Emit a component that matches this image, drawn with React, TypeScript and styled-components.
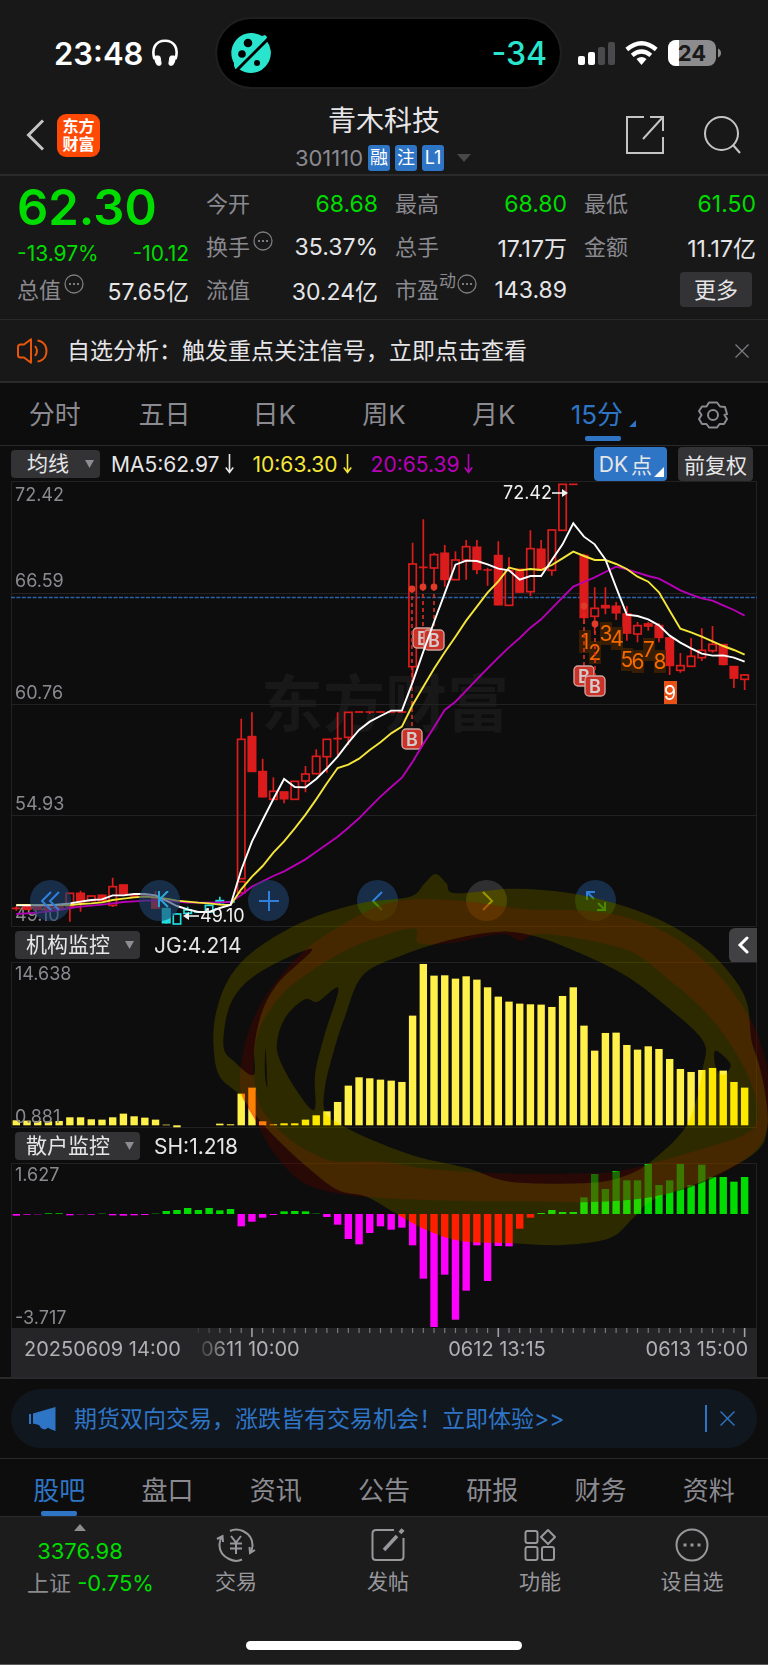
import React from 'react';
import styled, { createGlobalStyle } from 'styled-components';

const FONT = `Inter, 'Noto Sans CJK SC', sans-serif`;

const color = {
  panel: '#181818',
  page: '#0d0d0d',
  line: '#2a2a2c',
  grid: '#222224',
  button: '#333335',
  label: '#8a8a90',
  text: '#e6e6e8',
  blue: '#2f75c6',
  green: '#00dc00',
  red: '#dc1c1c',
  cyan: '#22dce0',
  yellow: '#f5e63a',
  purple: '#b800b8',
};

const GlobalStyle = createGlobalStyle`
  * { box-sizing: border-box; }
  body { margin: 0; background: ${color.page}; color: ${color.text}; font-family: ${FONT}; }
  button, select { font-family: inherit; border: 0; padding: 0; margin: 0; background: none; color: inherit; }
  button { cursor: pointer; }
  svg { display: block; flex: none; }
`;

const Page = styled.main`
  display: flex;
  flex-direction: column;
  min-height: 100vh;
`;

/* ---------- status bar ---------- */

const StatusBar = styled.header`
  display: grid;
  grid-template-columns: 217fr 343px 208fr;
  align-items: center;
  height: 100px;
  padding: 6px 0 0;
  background: ${color.panel};
`;

const Clock = styled.div`
  display: flex;
  align-items: center;
  gap: 8px;
  padding-left: 54px;
  font-size: 31px;
  font-weight: 600;
  color: #fff;
`;

const Island = styled.div`
  display: flex;
  align-items: center;
  justify-content: space-between;
  height: 68px;
  padding: 0 13px 0 14px;
  border-radius: 34px;
  background: #000;
  outline: 2px solid #1f1f1f;
  color: #2ae5cd;
  font-size: 32px;
  font-weight: 500;
`;

const Signals = styled.div`
  display: flex;
  align-items: center;
  justify-content: flex-end;
  gap: 10px;
  padding-right: 47px;
`;

/* ---------- title bar ---------- */

const TitleBar = styled.section`
  display: grid;
  grid-template-columns: 1fr auto 1fr;
  height: 76px;
  padding: 0 26px;
  border-bottom: 2px solid ${color.line};
  background: ${color.panel};
`;

const TitleSide = styled.div<{ $end?: boolean }>`
  display: flex;
  align-items: center;
  justify-content: ${(p) => (p.$end ? 'flex-end' : 'flex-start')};
  gap: ${(p) => (p.$end ? '38px' : '12px')};
  padding-bottom: 4px;
`;

const IconButton = styled.button`
  display: flex;
  color: #c4c4c6;
`;

const AppLogo = styled.div`
  display: flex;
  flex-direction: column;
  align-items: center;
  justify-content: center;
  width: 43px;
  height: 43px;
  border-radius: 9px;
  background: #ff4a06;
  color: #fff;
  font-size: 16px;
  font-weight: 700;
  line-height: 18px;
`;

const TitleBlock = styled.div`
  display: flex;
  flex-direction: column;
  align-items: center;
`;

const StockName = styled.h1`
  margin: 0;
  font-size: 28px;
  font-weight: 400;
  line-height: 42px;
`;

const CodeLine = styled.div`
  display: flex;
  align-items: center;
  gap: 5px;
  height: 32px;
  font-size: 22px;
  color: ${color.label};
`;

const Tag = styled.span`
  width: 22px;
  height: 26px;
  border-radius: 3px;
  background: ${color.blue};
  color: #fff;
  font-size: 18px;
  line-height: 26px;
  text-align: center;
`;

/* ---------- quote ---------- */

const Quote = styled.section`
  display: grid;
  grid-template-columns: repeat(4, 1fr);
  column-gap: 17px;
  padding: 6px 12px 8px 17px;
  border-bottom: 1px solid ${color.line};
  background: ${color.panel};
`;

const QuoteColumn = styled.div`
  display: flex;
  flex-direction: column;
`;

const Price = styled.div`
  height: 52px;
  font-size: 49px;
  font-weight: 600;
  line-height: 52px;
  color: ${color.green};
`;

const Change = styled.div`
  display: flex;
  align-items: center;
  justify-content: space-between;
  height: 34px;
  padding-top: 4px;
  font-size: 21px;
  color: ${color.green};
`;

const StatRow = styled.div`
  display: flex;
  align-items: center;
  justify-content: space-between;
  height: 43px;
  white-space: nowrap;
`;

const StatLabel = styled.span`
  display: flex;
  align-items: center;
  gap: 3px;
  padding-bottom: 4px;
  font-size: 22px;
  color: ${color.label};
  svg { margin-bottom: 8px; }
  sup { font-size: 17px; line-height: 17px; margin-bottom: 12px; margin-left: -3px; margin-right: -2px; }
`;

const StatValue = styled.span<{ $down?: boolean }>`
  font-size: 23px;
  color: ${(p) => (p.$down ? color.green : color.text)};
`;

const MoreButton = styled.button`
  width: 72px;
  height: 35px;
  margin-left: auto;
  margin-right: 4px;
  border-radius: 4px;
  background: ${color.button};
  font-size: 22px;
  line-height: 32px;
`;

const Notice = styled.section`
  display: flex;
  align-items: center;
  gap: 18px;
  height: 63px;
  padding: 0 19px 0 17px;
  border-bottom: 2px solid ${color.line};
  background: ${color.panel};
  font-size: 23px;
  span { padding-bottom: 4px; }
  button { margin-left: auto; color: #7c7c80; }
`;

/* ---------- tabs ---------- */

const Tabs = styled.nav<{ $inset?: boolean }>`
  display: grid;
  grid-template-columns: repeat(7, 1fr);
  height: ${(p) => (p.$inset ? '58px' : '63px')};
  padding: 0 ${(p) => (p.$inset ? '5px' : '0')};
  border-bottom: 1px solid ${color.line};
`;

const Tab = styled.button<{ $active?: boolean; $low?: boolean }>`
  position: relative;
  display: flex;
  align-items: center;
  justify-content: center;
  gap: 6px;
  padding-top: ${(p) => (p.$low ? '6px' : '1px')};
  font-size: 26px;
  line-height: 30px;
  color: ${(p) => (p.$active ? color.blue : color.label)};
  &::after {
    content: '';
    display: ${(p) => (p.$active ? 'block' : 'none')};
    position: absolute;
    left: calc(50% - 18px);
    bottom: ${(p) => (p.$low ? '0' : '4px')};
    width: 36px;
    height: 5px;
    border-radius: 2px;
    background: ${color.blue};
  }
`;

const Corner = styled.span<{ $tone: string; $size: number }>`
  align-self: flex-end;
  width: ${(p) => p.$size}px;
  height: ${(p) => p.$size}px;
  background: ${(p) => p.$tone};
  clip-path: polygon(100% 0, 100% 100%, 0 100%);
`;

const TabCorner = styled(Corner)`
  margin-bottom: 18px;
`;

/* ---------- chart area ---------- */

const Toolbar = styled.div`
  display: flex;
  align-items: center;
  height: 35px;
  padding: 1px 15px 0 11px;
  font-size: 21px;
`;

const Picker = styled.div<{ $wide?: boolean }>`
  position: relative;
  width: ${(p) => (p.$wide ? '125px' : '89px')};
  height: 28px;
  border-radius: 4px;
  background: ${color.button};
  select {
    width: 100%;
    height: 28px;
    padding-left: ${(p) => (p.$wide ? '11px' : '16px')};
    appearance: none;
    font-size: 21px;
    line-height: 28px;
    outline: none;
  }
  svg { position: absolute; right: 6px; top: 10px; pointer-events: none; }
`;

const Average = styled.span<{ $tone: string }>`
  display: flex;
  align-items: center;
  gap: 5px;
  margin-left: 11px;
  margin-right: 8px;
  color: ${(p) => p.$tone};
`;

const ToolButton = styled.button<{ $on?: boolean }>`
  display: flex;
  align-items: center;
  justify-content: center;
  gap: ${(p) => (p.$on ? '3px' : '0')};
  height: 34px;
  margin-left: ${(p) => (p.$on ? 'auto' : '11px')};
  padding: ${(p) => (p.$on ? '0 3px 0 5px' : '0 6px')};
  border-radius: 4px;
  background: ${(p) => (p.$on ? color.blue : color.button)};
  font-size: 21px;
  white-space: nowrap;
  ${Corner} { margin-bottom: 4px; margin-left: -1px; }
`;

const Stage = styled.section`
  position: relative;
  isolation: isolate;
  padding: 0 11px;
  background: ${color.page};
  border-bottom: 2px solid ${color.line};
  overflow: hidden;
`;

const Plot = styled.svg`
  width: 100%;
  height: auto;
  font-family: ${FONT};
`;

const PlotFrame = styled.div`
  position: relative;
`;

const IndicatorBar = styled.div`
  display: flex;
  align-items: center;
  justify-content: space-between;
  height: 35px;
  padding-top: 1px;
  padding-left: 4px;
  font-size: 21px;
`;

const IndicatorValue = styled.span`
  flex: 1;
  padding-left: 14px;
`;

const CollapseButton = styled.button`
  display: flex;
  align-items: center;
  justify-content: center;
  width: 28px;
  height: 35px;
  border-radius: 6px 0 0 6px;
  background: #414143;
  color: #fff;
`;

const ChartControls = styled.div`
  position: absolute;
  left: 19px;
  bottom: 6px;
  display: flex;
  gap: 68px;
`;

const RoundButton = styled.button<{ $muted?: boolean }>`
  display: flex;
  align-items: center;
  justify-content: center;
  width: 41px;
  height: 41px;
  border-radius: 50%;
  background: ${(p) => (p.$muted ? 'rgba(70, 70, 74, 0.6)' : 'rgba(32, 68, 112, 0.6)')};
  color: ${(p) => (p.$muted ? '#8f8f93' : '#2f80dc')};
`;

const Ink = styled.svg<{ $blend: 'multiply' | 'screen' }>`
  position: absolute;
  inset: 0;
  width: 100%;
  height: 100%;
  pointer-events: none;
  mix-blend-mode: ${(p) => p.$blend};
`;

/* ---------- bottom ---------- */

const BannerWrap = styled.section`
  padding: 10px 11px;
  border-bottom: 1px solid ${color.line};
`;

const Banner = styled.div`
  display: flex;
  align-items: center;
  height: 59px;
  padding: 0 22px 0 17px;
  border-radius: 30px;
  background: #10171f;
  color: ${color.blue};
  font-size: 23px;
  a { flex: 1; margin-left: 17px; padding-bottom: 4px; color: inherit; text-decoration: none; }
  button { padding-left: 13px; border-left: 2px solid ${color.blue}; height: 27px; display: flex; align-items: center; color: inherit; }
`;

const Dock = styled.footer`
  display: grid;
  grid-template-columns: 160px repeat(4, 1fr);
  flex: 1;
  grid-template-rows: 124px 1fr;
  min-height: 148px;
  background: #1c1c1c;
  border-bottom: 1px solid #5a5a5a;
`;

const IndexCell = styled.button`
  display: flex;
  flex-direction: column;
  align-items: center;
  padding-top: 7px;
  font-size: 22px;
  line-height: 32px;
  color: ${color.green};
  white-space: nowrap;
  svg { margin-bottom: 4px; }
  b { font-weight: 400; color: ${color.label}; }
  span { margin-left: 21px; }
  em { font-style: normal; }
`;

const DockItem = styled.button`
  display: flex;
  flex-direction: column;
  align-items: center;
  gap: 5px;
  padding-top: 11px;
  font-size: 21px;
  line-height: 30px;
  color: #98989c;
`;

const HomeBar = styled.div`
  grid-column: 1 / -1;
  justify-self: center;
  width: 276px;
  height: 9px;
  border-radius: 5px;
  background: #fff;
`;

/* ---------- data ---------- */

const STEP = 10.711;
const centre = (i: number) => 5.3 + i * STEP;

/** index, high, body top, body bottom, low, kind: f = filled, h = hollow, d = dash; c suffix = cyan */
type Candle = [number, number, number, number, number, string];

const candles: Candle[] = [
  [0, 1279, 1285, 1285, 1292, 'd'], [1, 1278, 1278, 1288, 1288, 'f'], [2, 1278, 1278, 1288, 1288, 'f'],
  [3, 1280, 1280, 1290, 1290, 'f'], [4, 1276, 1278, 1288, 1290, 'f'], [5, 1240, 1240, 1280, 1325, 'h'],
  [6, 1232, 1240, 1265, 1295, 'f'], [7, 1248, 1248, 1262, 1262, 'h'], [8, 1244, 1246, 1262, 1262, 'f'],
  [9, 1193, 1220, 1276, 1281, 'h'], [10, 1215, 1215, 1242, 1242, 'f'], [11, 1248, 1248, 1248, 1248, 'd'],
  [12, 1246, 1246, 1246, 1252, 'd'], [13, 1233, 1250, 1284, 1284, 'f'], [14, 1286, 1286, 1328, 1331, 'fc'],
  [15, 1300, 1302, 1332, 1332, 'hc'], [16, 1280, 1290, 1300, 1300, 'hc'], [17, 1296, 1296, 1296, 1296, 'dc'],
  [18, 1274, 1276, 1296, 1296, 'hc'], [19, 1250, 1262, 1268, 1275, 'fc'], [20, 1264, 1266, 1266, 1268, 'dc'],
  [21, 716, 778, 1196, 1196, 'h'], [21, 1205, 1205, 1238, 1238, 'h'], [22, 697, 770, 874, 874, 'f'],
  [23, 836, 875, 950, 952, 'f'], [24, 892, 934, 958, 958, 'h'], [25, 936, 936, 956, 970, 'f'],
  [26, 904, 904, 958, 958, 'h'], [27, 858, 882, 903, 937, 'h'], [28, 808, 829, 881, 881, 'h'],
  [29, 778, 778, 830, 878, 'h'], [30, 697, 776, 776, 826, 'd'], [31, 697, 697, 772, 795, 'h'],
  [32, 696, 696, 696, 696, 'd'], [33, 696, 696, 696, 702, 'd'], [34, 696, 696, 696, 696, 'd'],
  [35, 696, 696, 696, 696, 'd'], [36, 696, 696, 696, 696, 'd'],
  [37, 188, 252, 560, 610, 'h'], [38, 118, 262, 262, 320, 'd'], [39, 218, 224, 264, 318, 'h'],
  [40, 195, 220, 298, 320, 'f'], [41, 214, 240, 299, 299, 'h'], [42, 180, 200, 240, 299, 'h'],
  [43, 180, 202, 268, 283, 'f'], [44, 263, 270, 270, 317, 'd'], [45, 184, 227, 374, 376, 'f'],
  [46, 232, 272, 376, 376, 'h'], [47, 268, 268, 336, 338, 'f'], [48, 151, 206, 335, 348, 'h'],
  [49, 180, 208, 270, 270, 'f'], [50, 150, 150, 271, 287, 'h'], [51, 13, 13, 151, 151, 'h'],
  [52, 13, 13, 13, 13, 'd'], [53, 221, 227, 412, 432, 'f'], [54, 322, 385, 409, 460, 'h'],
  [55, 322, 377, 383, 403, 'f'], [56, 366, 379, 398, 420, 'f'], [57, 378, 402, 459, 482, 'f'],
  [58, 426, 437, 462, 487, 'h'], [59, 425, 432, 438, 452, 'f'], [60, 430, 437, 472, 487, 'f'],
  [61, 474, 474, 556, 585, 'f'], [62, 519, 557, 571, 578, 'h'], [63, 474, 529, 559, 559, 'h'],
  [64, 445, 511, 533, 543, 'h'], [65, 438, 493, 512, 518, 'h'], [66, 494, 494, 553, 556, 'f'],
  [67, 560, 560, 594, 624, 'f'], [68, 582, 585, 598, 630, 'h'],
];

const ma5 = [1276, 1276, 1276, 1276, 1273, 1270, 1265, 1260, 1258, 1246, 1246, 1242, 1242, 1246, 1262, 1278, 1288,
  1296, 1296, 1284, 1275, 1170, 1085, 1020, 957, 897, 921, 922, 897, 865, 830, 788, 750, 725, 708, 692, 692, 607, 515,
  426, 340, 254, 242, 243, 253, 266, 271, 299, 288, 288, 240, 193, 130, 170, 193, 238, 322, 404, 408, 418, 436, 467,
  488, 505, 521, 527, 526, 533, 545];

const ma10 = [1275, 1275, 1275, 1275, 1275, 1275, 1272, 1270, 1267, 1260, 1256, 1252, 1250, 1252, 1256, 1262, 1265,
  1268, 1270, 1274, 1275, 1228, 1190, 1158, 1118, 1084, 1045, 1004, 958, 910, 864, 854, 836, 810, 787, 760, 740, 675,
  620, 566, 517, 470, 422, 380, 338, 304, 263, 271, 267, 270, 255, 235, 215, 228, 240, 240, 252, 267, 290, 305, 337,
  392, 446, 457, 470, 484, 498, 510, 524];

const ma20 = [1302, 1300, 1298, 1294, 1290, 1284, 1280, 1277, 1274, 1270, 1266, 1264, 1262, 1262, 1262, 1265, 1268,
  1268, 1268, 1267, 1266, 1245, 1220, 1204, 1188, 1174, 1156, 1138, 1115, 1093, 1070, 1043, 1015, 982, 950, 921, 893,
  845, 792, 742, 690, 665, 632, 598, 565, 533, 502, 474, 443, 418, 385, 352, 320, 306, 292, 276, 260, 268, 278, 288,
  296, 313, 331, 344, 355, 362, 376, 390, 407];

const jg = [15, 14, 13, 12, 13, 24, 24, 18, 17, 24, 35, 27, 23, 17, 2, -6, 0, 0, 0, 5, 3, 95, 113, 12, 3, 6, 6, 17,
  30, 42, 70, 119, 144, 141, 137, 134, 130, 329, 484, 449, 450, 440, 447, 437, 414, 386, 371, 365, 363, 362, 355, 388,
  414, 299, 224, 277, 278, 241, 227, 237, 229, 199, 169, 160, 166, 172, 164, 130, 113];

const sh = [-5, -2, -1, 2, 2, -4, -1, -2, 1, -4, -5, -4, -3, 1, 9, 12, 18, 12, 18, 11, 15, -37, -23, -11, -3, 8, 9, 8,
  1, -9, -32, -75, -91, -57, -37, -47, -41, -94, -194, -339, -182, -317, -230, -94, -201, -96, -97, -44, -11, 3, 12,
  6, 6, 50, 120, 75, 129, 101, 101, 150, 87, 101, 150, 87, 148, 111, 111, 97, 111];

const levels = [
  { price: '72.42', y: 20 },
  { price: '66.59', y: 106 },
  { price: '60.76', y: 218 },
  { price: '54.93', y: 329 },
  { price: '49.10', y: 440 },
];

const counts = [
  { n: 1, x: 574, y: 160 }, { n: 2, x: 584, y: 171 }, { n: 3, x: 595, y: 152 }, { n: 4, x: 606, y: 157 },
  { n: 5, x: 616, y: 178 }, { n: 6, x: 627, y: 180 }, { n: 7, x: 638, y: 168 }, { n: 8, x: 649, y: 180 },
];

const buys = [
  { x: 412, y: 157, from: 106 }, { x: 423, y: 159, from: 106 }, { x: 401, y: 258, from: 108 },
  { x: 573, y: 195, from: 125 }, { x: 584, y: 205, from: 143 },
];

/* ---------- hand-drawn ink ---------- */

type Pt = [number, number];

const smooth = (pts: Pt[]) => {
  const n = pts.length;
  let d = `M${pts[0][0]},${pts[0][1]}`;
  for (let i = 0; i < n; i++) {
    const [a, b, c, e] = [pts[(i + n - 1) % n], pts[i], pts[(i + 1) % n], pts[(i + 2) % n]];
    d += ` C${b[0] + (c[0] - a[0]) / 6},${b[1] + (c[1] - a[1]) / 6} ${c[0] - (e[0] - b[0]) / 6},${c[1] - (e[1] - b[1]) / 6} ${c[0]},${c[1]}`;
  }
  return d + 'Z';
};

const yellowInk: Pt[][] = [
  [[580, 110], [620, 70], [650, 42], [680, 70], [705, 100], [860, 86], [1000, 96], [1130, 125], [1270, 180],
    [1390, 260], [1470, 350], [1510, 430], [1522, 540], [1542, 610], [1560, 700], [1566, 800], [1535, 875],
    [1400, 958], [1250, 1020], [1195, 1075], [1130, 1135], [1000, 1155], [860, 1150], [720, 1143], [620, 1108],
    [540, 1060], [460, 1010], [380, 990], [300, 925], [215, 840], [160, 775], [110, 705], [55, 650], [38, 570],
    [42, 470], [75, 365], [135, 285], [230, 215], [330, 165], [450, 128]],
  [[450, 345], [560, 285], [700, 237], [830, 215], [930, 230], [1050, 280], [1180, 350], [1300, 450], [1390, 545],
    [1388, 625], [1370, 720], [1335, 810], [1250, 900], [1180, 945], [1080, 968], [860, 966], [740, 925],
    [600, 890], [480, 842], [390, 795], [345, 755], [345, 680], [370, 570], [400, 470]],
  [[382, 385], [325, 425], [290, 418], [240, 465], [215, 530], [217, 590], [260, 680], [315, 750], [318, 640],
    [345, 520]],
  [[310, 268], [200, 315], [120, 375], [78, 450], [65, 560], [95, 605], [148, 645], [150, 560], [170, 460],
    [215, 370]],
  [[1422, 572], [1464, 612], [1446, 645], [1424, 625]],
  [[181, 565], [186, 680], [179, 640]],
];

const redInk: Pt[][] = [
  [[590, 118], [740, 125], [900, 148], [1020, 150], [1150, 165], [1290, 220], [1400, 310], [1470, 395],
    [1525, 490], [1556, 580], [1568, 650], [1566, 800], [1520, 885], [1400, 962], [1250, 1010], [1080, 1026],
    [900, 1024], [700, 1022], [500, 1014], [380, 1000], [280, 965], [205, 880], [155, 785], [112, 690],
    [120, 570], [150, 470], [200, 380], [290, 270], [400, 190], [490, 140]],
  [[590, 205], [605, 250], [700, 248], [830, 222], [885, 242], [930, 222], [1050, 236], [1190, 275], [1290, 355],
    [1400, 462], [1480, 580], [1528, 690], [1538, 780], [1500, 825], [1370, 872], [1180, 928], [1080, 940],
    [830, 940], [640, 928], [500, 905], [380, 905], [320, 885], [250, 840], [185, 770], [158, 710], [148, 620],
    [160, 520], [200, 440], [260, 370], [370, 290], [470, 240]],
];

const inkLayers: { blend: 'multiply' | 'screen'; fill: string; shape: Pt[][] }[] = [
  { blend: 'multiply', fill: '#ff7866', shape: redInk },
  { blend: 'screen', fill: '#1c0200', shape: redInk },
  { blend: 'multiply', fill: '#fff400', shape: yellowInk },
  { blend: 'screen', fill: '#221f00', shape: yellowInk },
];

const InkLayers = () => (
  <>
    {inkLayers.map((l, i) => (
      <Ink key={i} $blend={l.blend} viewBox="0 0 768 896" preserveAspectRatio="none" aria-hidden="true">
        <g transform="translate(200 379) scale(.3623 .3333)">
          <path d={l.shape.map(smooth).join(' ')} fill={l.fill} fillRule="evenodd" />
        </g>
      </Ink>
    ))}
  </>
);

/* ---------- charts ---------- */

const toY = (v: number) => v / 3 - 1;

const CandleShape = ({ c }: { c: Candle }) => {
  const [i, high, top, bottom, low, kind] = c;
  const tone = kind.endsWith('c') ? color.cyan : color.red;
  const x = centre(i);
  if (kind[0] === 'd') {
    return <path d={`M${x - 4.3} ${toY(top)}h8.6M${x} ${toY(high)}V${toY(low)}`} stroke={tone} strokeWidth="1.7" />;
  }
  return (
    <g stroke={tone} strokeWidth="1.7" fill={kind[0] === 'f' ? tone : 'none'}>
      <path d={`M${x} ${toY(high)}V${toY(top)}M${x} ${toY(bottom)}V${toY(low)}`} />
      <rect x={x - 3.7} y={toY(top)} width="7.4" height={Math.max(1, (bottom - top) / 3)} />
    </g>
  );
};

const AverageLine = ({ values, tone }: { values: number[]; tone: string }) => (
  <polyline points={values.map((v, i) => `${centre(i)},${toY(v)}`).join(' ')} fill="none" stroke={tone} strokeWidth="1.9" />
);

const PriceChart = () => (
  <Plot viewBox="0 0 746 446" role="img" aria-label="15分K线">
    <text x="250" y="246" fontSize="62" fontWeight="700" fill="#181818">东方财富</text>
    <path d="M.5 .5H745.5V445.5H.5ZM0 112.5H746M0 223.5H746M0 334.5H746" fill="none" stroke={color.grid} />
    <path d="M0 116.5H746" stroke="#2a62a8" strokeDasharray="4 1.4" strokeWidth="1.6" />
    {levels.map((l) => (
      <text key={l.price} x="4" y={l.y} fontSize="18" fill={color.label}>{l.price}</text>
    ))}
    {candles.map((c, i) => <CandleShape key={i} c={c} />)}
    {counts.map((c) => (
      <g key={c.n}>
        <rect x={c.x - 6} y={c.y - 11} width="12" height="23" fill="#3f2100" fillOpacity=".85" />
        <text x={c.x} y={c.y + 8} fontSize="21" textAnchor="middle" fill="#f56a00">{c.n}</text>
      </g>
    ))}
    <rect x="653" y="200" width="13" height="23" fill="#e85216" />
    <text x="659" y="219" fontSize="20" textAnchor="middle" fill="#fff">9</text>
    {buys.map((b) => (
      <g key={b.x}>
        <path d={`M${b.x} ${b.from}V${b.y - 10}`} stroke="#dc3020" strokeWidth="1.6" strokeDasharray="4 3" />
        <circle cx={b.x} cy={b.from} r="3.4" fill="#e03a28" />
        <rect x={b.x - 10} y={b.y - 10} width="20" height="20" rx="4" fill="#cc3328" stroke="#cfa29c" strokeWidth="1.4" />
        <text x={b.x} y={b.y + 7} fontSize="18" fontWeight="600" textAnchor="middle" fill="#d4cccc">B</text>
      </g>
    ))}
    <AverageLine values={ma20} tone={color.purple} />
    <AverageLine values={ma10} tone={color.yellow} />
    <AverageLine values={ma5} tone="#fff" />
    <text x="492" y="18" fontSize="18" fill="#f0f0f0">72.42</text>
    <path d="M541 12H553" stroke="#f0f0f0" strokeWidth="1.6" />
    <path d="M551 8L557 12L551 16Z" fill="#f0f0f0" />
    <text x="189" y="441" fontSize="18" fill="#f0f0f0">49.10</text>
    <path d="M177 435H188" stroke="#f0f0f0" strokeWidth="1.6" />
    <path d="M178 431L172 435L178 439Z" fill="#f0f0f0" />
  </Plot>
);

const JgChart = () => (
  <Plot viewBox="0 0 746 166" role="img" aria-label="机构监控">
    <path d="M.5 .5H745.5V165.5H.5Z" fill="none" stroke={color.grid} />
    {jg.map((v, i) => (
      <rect key={i} x={centre(i) - 3.7} y={v > 0 ? 163.3 - v / 3 : 163.3} width="7.4" height={Math.abs(v) / 3} fill="#fff04a" />
    ))}
    <text x="4" y="18" fontSize="18" fill={color.label}>14.638</text>
    <text x="4" y="161" fontSize="18" fill={color.label}>0.881</text>
  </Plot>
);

const ShChart = () => (
  <Plot viewBox="0 0 746 214" role="img" aria-label="散户监控">
    <defs>
      <linearGradient id="fade">
        <stop offset="0" stopColor="#b0b0b4" stopOpacity=".2" />
        <stop offset=".3" stopColor="#b0b0b4" />
      </linearGradient>
    </defs>
    <path d="M.5 165V.5H745.5V165" fill="none" stroke={color.grid} />
    {sh.map((v, i) => (
      <rect
        key={i}
        x={centre(i) - 3.7}
        y={v > 0 ? 51 - v / 3 : 51}
        width="7.4"
        height={Math.abs(v) / 3}
        fill={v > 0 ? color.green : '#ff00ff'}
      />
    ))}
    <text x="4" y="18" fontSize="18" fill={color.label}>1.627</text>
    <text x="4" y="161" fontSize="18" fill={color.label}>-3.717</text>
    <rect y="165" width="746" height="49" fill="#252527" />
    {Array.from({ length: 52 }, (_, k) => k + 17).map((i) => {
      const major = i === 22 || i === 45 || i === 68;
      return (
        <path
          key={i}
          d={`M${centre(i)} 165v${major ? 9 : 5}`}
          stroke={major ? '#a0a0a4' : '#77777b'}
          strokeWidth={major ? 1.6 : 1.2}
          opacity={i < 20 ? (i - 16) / 4 : 1}
        />
      );
    })}
    <g fontSize="20" fill="#b0b0b4">
      <text x="13" y="193">20250609 14:00</text>
      <text x="190" y="193" fill="url(#fade)">0611 10:00</text>
      <text x="486" y="193" textAnchor="middle">0612 13:15</text>
      <text x="737" y="193" textAnchor="end">0613 15:00</text>
    </g>
  </Plot>
);

/* ---------- small drawings ---------- */

const Dots = () => (
  <svg width="20" height="20" viewBox="0 0 20 20" fill="none" stroke="#7c7c80" strokeWidth="1.3">
    <circle cx="10" cy="10" r="9" />
    <path d="M5 10h2M9 10h2M13 10h2" strokeWidth="2" />
  </svg>
);

const Caret = () => (
  <svg width="9" height="8" viewBox="0 0 9 8" fill="#8e8e92"><path d="M0 0H9L4.5 8Z" /></svg>
);

const Down = () => (
  <svg width="9" height="20" viewBox="0 0 9 20" fill="none" stroke="currentColor" strokeWidth="1.6">
    <path d="M4.5 0V18M.8 13.5L4.5 18.5L8.2 13.5" />
  </svg>
);

const Cross = ({ size }: { size: number }) => (
  <svg width={size} height={size} viewBox="0 0 14 14" fill="none" stroke="currentColor" strokeWidth="1.3">
    <path d="M.5 .5L13.5 13.5M13.5 .5L.5 13.5" />
  </svg>
);

const Line = ({ children, w, h, s = 2 }: { children: React.ReactNode; w: number; h: number; s?: number }) => (
  <svg width={w} height={h} viewBox={`0 0 ${w} ${h}`} fill="none" stroke="currentColor" strokeWidth={s}>{children}</svg>
);

const SelectBox = ({ label, wide }: { label: string; wide?: boolean }) => (
  <Picker $wide={wide}>
    <select aria-label={label} defaultValue={label}><option>{label}</option></select>
    <Caret />
  </Picker>
);

const Stat = ({ label, value, down, info, sup }: { label: string; value: string; down?: boolean; info?: boolean; sup?: string }) => (
  <StatRow>
    <StatLabel>{label}{sup && <sup>{sup}</sup>}{info && <Dots />}</StatLabel>
    <StatValue $down={down}>{value}</StatValue>
  </StatRow>
);

export default function App() {
  return (
    <Page lang="zh-CN">
      <GlobalStyle />
      <StatusBar>
        <Clock>
          23:48
          <svg width="28" height="28" viewBox="0 0 28 28" fill="none" stroke="#fff" strokeWidth="2.6">
            <path d="M3.5 20C0 9 5 1.8 14 1.8S28 9 24.5 20" />
            <path d="M4.5 17h3.2q1.200 0 1.400 1.200l1 6q.2 1.800-1.300 2.100-3 .6-4-2.600l-1.500-5zM23.500 17h-3.200q-1.200 0-1.400 1.200l-1 6q-.2 1.800 1.300 2.100 3 .6 4-2.600l1.500-5z" fill="#fff" stroke="#fff" strokeWidth="1" />
          </svg>
        </Clock>
        <Island>
          <svg width="40" height="40" viewBox="0 0 40 40">
            <path d="M20 0A20 20 0 0 1 31 3L34 2L36 4L35.500 7.500A20 20 0 0 1 20 40A20 20 0 0 1 8 36L4.500 36L3 33L3 30A20 20 0 0 1 20 0Z" fill="#2ae5cd" />
            <path d="M38 5L5 38" stroke="#000" strokeWidth="3" />
            <g fill="#000"><circle cx="17" cy="10" r="4.3" /><circle cx="11" cy="21" r="3.8" /><circle cx="26" cy="30" r="3" /></g>
          </svg>
          -34
        </Island>
        <Signals>
          <svg width="37" height="24" viewBox="0 0 37 24" fill="#fff">
            <rect y="15" width="7" height="9" rx="2" /><rect x="10" y="11" width="7" height="13" rx="2" />
            <g fill="#4a4a4c"><rect x="20" y="6" width="7" height="18" rx="2" /><rect x="30" y="1" width="7" height="23" rx="2" /></g>
          </svg>
          <svg width="33" height="24" viewBox="0 0 33 24" fill="none" stroke="#fff" strokeWidth="4.3">
            <path d="M1.8 8.5Q16.5-4 31.2 8.500" /><path d="M7.2 14.3Q16.5 6.5 25.8 14.3" />
            <path d="M11.5 18Q16.5 14 21.5 18L16.5 24Z" fill="#fff" stroke="none" />
          </svg>
          <svg width="53" height="26" viewBox="0 0 53 26" fontFamily="Inter, sans-serif">
            <rect width="48" height="26" rx="8" fill="#8c8c8e" />
            <path d="M11 0V26H8A8 8 0 0 1 0 18V8A8 8 0 0 1 8 0Z" fill="#fff" />
            <path d="M50 8.5Q53 10 53 13T50 17.5Z" fill="#8c8c8e" />
            <text x="24" y="21" fontSize="22" fontWeight="700" textAnchor="middle" fill="#1a1a1a">24</text>
          </svg>
        </Signals>
      </StatusBar>

      <TitleBar>
        <TitleSide>
          <IconButton aria-label="返回"><Line w={19} h={32} s={3}><path d="M17 1.5L2.5 16L17 30.5" /></Line></IconButton>
          <AppLogo><span>东方</span><span>财富</span></AppLogo>
        </TitleSide>
        <TitleBlock>
          <StockName>青木科技</StockName>
          <CodeLine>
            301110 <Tag>融</Tag><Tag>注</Tag><Tag>L1</Tag>
            <svg width="24" height="8" viewBox="0 0 24 8" fill="#48484a"><path d="M8 0H22L15 8Z" /></svg>
          </CodeLine>
        </TitleBlock>
        <TitleSide $end>
          <IconButton aria-label="分享">
            <Line w={39} h={40}><path d="M18 2H1V38H37V22M24 2H37V16M37 2L17 24" /></Line>
          </IconButton>
          <IconButton aria-label="搜索">
            <Line w={39} h={40}><circle cx="18.5" cy="18.5" r="16.5" /><path d="M30 30L37 38" /></Line>
          </IconButton>
        </TitleSide>
      </TitleBar>

      <Quote>
        <QuoteColumn>
          <Price>62.30</Price>
          <Change><span>-13.97%</span><span>-10.12</span></Change>
          <Stat label="总值" value="57.65亿" info />
        </QuoteColumn>
        <QuoteColumn>
          <Stat label="今开" value="68.68" down />
          <Stat label="换手" value="35.37%" info />
          <Stat label="流值" value="30.24亿" />
        </QuoteColumn>
        <QuoteColumn>
          <Stat label="最高" value="68.80" down />
          <Stat label="总手" value="17.17万" />
          <Stat label="市盈" sup="动" value="143.89" info />
        </QuoteColumn>
        <QuoteColumn>
          <Stat label="最低" value="61.50" down />
          <Stat label="金额" value="11.17亿" />
          <StatRow><MoreButton>更多</MoreButton></StatRow>
        </QuoteColumn>
      </Quote>

      <Notice>
        <svg width="32" height="26" viewBox="0 0 32 26" fill="none" stroke="#e8560c" strokeWidth="2">
          <path d="M14 1.2V24.8L7 19.5H3.5Q1 19.5 1 17V9Q1 6.5 3.5 6.5H7Z" strokeLinejoin="round" />
          <path d="M18 8Q22 13 18 18M20.5 2.5Q25 3 28 7Q31 13 28 19Q25 23 20.5 23.5" />
        </svg>
        <span>自选分析：触发重点关注信号，立即点击查看</span>
        <IconButton aria-label="关闭"><Cross size={14} /></IconButton>
      </Notice>

      <Tabs>
        <Tab>分时</Tab>
        <Tab>五日</Tab>
        <Tab>日K</Tab>
        <Tab>周K</Tab>
        <Tab>月K</Tab>
        <Tab $active>15分<TabCorner $tone={color.blue} $size={7} /></Tab>
        <Tab aria-label="设置">
          <Line w={30} h={28}>
            <path d="M11 1.5H19L22 5.5L27 6L29 13L26.5 14L29 18L26 23L21.5 23L19 26.5H11L8.5 23L4 23L1 18L3.5 14L1 10L4 5.5L8.5 5.5Z" strokeLinejoin="round" />
            <circle cx="15" cy="14" r="5" />
          </Line>
        </Tab>
      </Tabs>

      <Toolbar>
        <SelectBox label="均线" />
        <Average $tone={color.text}>MA5:62.97<Down /></Average>
        <Average $tone={color.yellow}>10:63.30<Down /></Average>
        <Average $tone={color.purple}>20:65.39<Down /></Average>
        <ToolButton $on><span>DK</span><span>点</span><Corner $tone="#fff" $size={10} /></ToolButton>
        <ToolButton>前复权</ToolButton>
      </Toolbar>

      <Stage>
        <PlotFrame>
          <PriceChart />
          <ChartControls>
            <RoundButton aria-label="最早"><Line w={20} h={20}><path d="M10 1L1 10L10 19M18 1L9 10L18 19" /></Line></RoundButton>
            <RoundButton aria-label="缩小"><Line w={18} h={20}><path d="M8 0V16M17 0L9 8L17 16" stroke="#28a8d8" /></Line></RoundButton>
            <RoundButton aria-label="放大"><Line w={20} h={20}><path d="M10 0V20M0 10H20" /></Line></RoundButton>
            <RoundButton aria-label="左移"><Line w={20} h={20}><path d="M14 1L5 10L14 19" /></Line></RoundButton>
            <RoundButton aria-label="右移" $muted><Line w={20} h={20}><path d="M6 1L15 10L6 19" /></Line></RoundButton>
            <RoundButton aria-label="全屏"><Line w={20} h={20}><path d="M1 9V1H9M1 1L8 8M19 11V19H11M19 19L12 12" /></Line></RoundButton>
          </ChartControls>
        </PlotFrame>
        <IndicatorBar>
          <SelectBox label="机构监控" wide />
          <IndicatorValue>JG:4.214</IndicatorValue>
          <CollapseButton aria-label="展开"><Line w={12} h={18} s={3}><path d="M10 2L3 9L10 16" strokeLinecap="round" /></Line></CollapseButton>
        </IndicatorBar>
        <JgChart />
        <IndicatorBar>
          <SelectBox label="散户监控" wide />
          <IndicatorValue>SH:1.218</IndicatorValue>
        </IndicatorBar>
        <ShChart />
        <InkLayers />
      </Stage>

      <BannerWrap>
        <Banner>
          <svg width="29" height="24" viewBox="0 0 29 24" fill={color.blue}>
            <path d="M1 7H3V17H1ZM5 6.5L27.5 0V24L22 22L20 20.5Q17 24 13 21L11 18L5 16.5Z" />
          </svg>
          <a href="#trade">期货双向交易，涨跌皆有交易机会！立即体验&gt;&gt;</a>
          <button aria-label="关闭"><Cross size={15} /></button>
        </Banner>
      </BannerWrap>

      <Tabs $inset>
        {['股吧', '盘口', '资讯', '公告', '研报', '财务', '资料'].map((t, i) => (
          <Tab key={t} $low $active={i === 0}>{t}</Tab>
        ))}
      </Tabs>

      <Dock>
        <IndexCell>
          <svg width="12" height="7" viewBox="0 0 12 7" fill="#8e8e92"><path d="M0 7H12L6 0Z" /></svg>
          <em>3376.98</em>
          <span><b>上证</b> -0.75%</span>
        </IndexCell>
        <DockItem>
          <Line w={40} h={34}>
            <path d="M14 3Q20 0 27 3Q37 8 36.5 18Q36 22 34.5 25M39 22L34 25L33.5 19M26 31.5Q20 34.5 13 31Q3 26 3.5 16Q4 11 6 8.5M1 11L6.5 8L7 14" />
            <path d="M15 8L20 14.5L25 8M20 14.5V26M14 15.5H26M14 20.5H26" />
          </Line>
          交易
        </DockItem>
        <DockItem>
          <Line w={34} h={34}>
            <path d="M23 2H5Q1.5 2 1.5 5.5V28.5Q1.5 32 5 32H29Q32.5 32 32.5 28.5V10" />
            <path d="M13 22L26 8" strokeWidth="3.5" /><path d="M29 5L32 1.5" strokeWidth="4" />
          </Line>
          发帖
        </DockItem>
        <DockItem>
          <Line w={32} h={34}>
            <rect x="1.5" y="3" width="12" height="12" rx="2" /><rect x="1.5" y="19" width="12" height="13" rx="2" />
            <rect x="18" y="19" width="12" height="13" rx="2" /><path d="M24 2L31 9L24 16L17 9Z" strokeLinejoin="round" />
          </Line>
          功能
        </DockItem>
        <DockItem>
          <Line w={34} h={34}>
            <circle cx="17" cy="17" r="15.5" /><path d="M8.5 17h3M15.5 17h3M22.5 17h3" strokeWidth="3" />
          </Line>
          设自选
        </DockItem>
        <HomeBar />
      </Dock>
    </Page>
  );
}
